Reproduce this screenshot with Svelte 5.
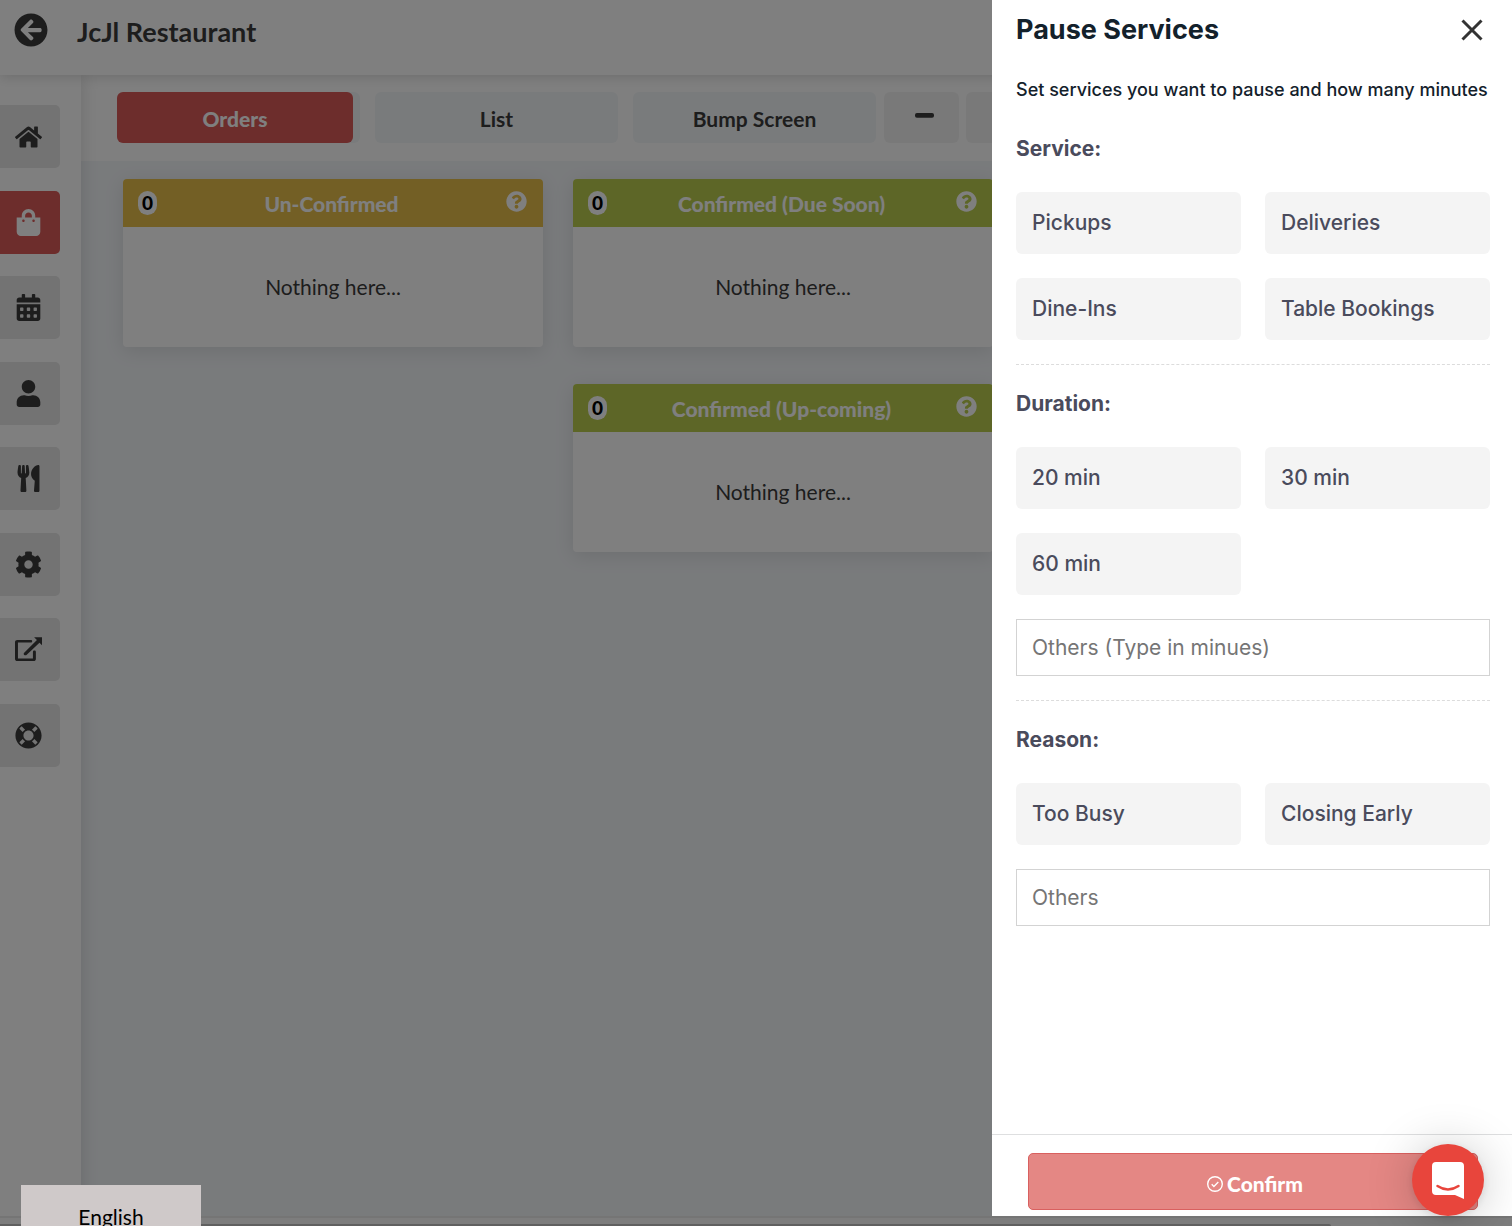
<script>
  const nav = [
    { name: 'Home', box: '0 0 576 512', d: 'M280.37 148.26L96 300.11V464a16 16 0 0 0 16 16l112.06-.29a16 16 0 0 0 15.92-16V368a16 16 0 0 1 16-16h64a16 16 0 0 1 16 16v95.64a16 16 0 0 0 16 16.05L464 480a16 16 0 0 0 16-16V300L295.67 148.26a12.19 12.19 0 0 0-15.3 0zM571.6 251.47L488 182.56V44.05a12 12 0 0 0-12-12h-56a12 12 0 0 0-12 12v72.61L318.47 43a48 48 0 0 0-61 0L4.34 251.47a12 12 0 0 0-1.6 16.9l25.5 31A12 12 0 0 0 45.15 301l235.22-193.74a12.19 12.19 0 0 1 15.3 0L530.9 301a12 12 0 0 0 16.9-1.6l25.5-31a12 12 0 0 0-1.7-16.93z' },
    { name: 'Orders', active: true, box: '0 0 448 512', d: 'M352 160v-32C352 57.42 294.579 0 224 0 153.42 0 96 57.42 96 128v32H0v272c0 44.183 35.817 80 80 80h288c44.183 0 80-35.817 80-80V160h-96zm-192-32c0-35.29 28.71-64 64-64s64 28.71 64 64v32H160v-32zm160 120c-13.255 0-24-10.745-24-24s10.745-24 24-24 24 10.745 24 24-10.745 24-24 24zm-192 0c-13.255 0-24-10.745-24-24s10.745-24 24-24 24 10.745 24 24-10.745 24-24 24z' },
    { name: 'Bookings', box: '0 0 448 512', d: 'M0 464c0 26.5 21.5 48 48 48h352c26.5 0 48-21.5 48-48V192H0v272zm320-196c0-6.6 5.4-12 12-12h40c6.6 0 12 5.4 12 12v40c0 6.6-5.4 12-12 12h-40c-6.6 0-12-5.4-12-12v-40zm0 128c0-6.6 5.4-12 12-12h40c6.6 0 12 5.4 12 12v40c0 6.6-5.4 12-12 12h-40c-6.6 0-12-5.4-12-12v-40zM192 268c0-6.6 5.4-12 12-12h40c6.6 0 12 5.4 12 12v40c0 6.6-5.4 12-12 12h-40c-6.6 0-12-5.4-12-12v-40zm0 128c0-6.6 5.4-12 12-12h40c6.6 0 12 5.4 12 12v40c0 6.6-5.4 12-12 12h-40c-6.6 0-12-5.4-12-12v-40zM64 268c0-6.6 5.4-12 12-12h40c6.6 0 12 5.4 12 12v40c0 6.6-5.4 12-12 12H76c-6.6 0-12-5.4-12-12v-40zm0 128c0-6.6 5.4-12 12-12h40c6.6 0 12 5.4 12 12v40c0 6.6-5.4 12-12 12H76c-6.6 0-12-5.4-12-12v-40zM400 64h-48V16c0-8.8-7.2-16-16-16h-32c-8.8 0-16 7.2-16 16v48H160V16c0-8.8-7.2-16-16-16h-32c-8.8 0-16 7.2-16 16v48H48C21.5 64 0 85.5 0 112v48h448v-48c0-26.5-21.5-48-48-48z' },
    { name: 'Customers', box: '0 0 448 512', d: 'M224 256c70.7 0 128-57.3 128-128S294.7 0 224 0 96 57.3 96 128s57.3 128 128 128zm89.6 32h-16.7c-22.2 10.2-46.9 16-72.9 16s-50.6-5.8-72.9-16h-16.7C60.2 288 0 348.2 0 422.4V464c0 26.5 21.5 48 48 48h352c26.5 0 48-21.5 48-48v-41.6c0-74.2-60.2-134.4-134.4-134.4z' },
    { name: 'Menus', box: '0 0 416 512', d: 'M207.9 15.2c.8 4.7 16.1 94.5 16.1 128.8 0 52.3-27.8 89.6-68.9 104.6L168 486.7c.7 13.7-10.2 25.3-24 25.3H80c-13.7 0-24.7-11.5-24-25.3l12.9-238.1C27.7 233.6 0 196.2 0 144 0 109.6 15.3 19.9 16.1 15.2 19.3-5.1 61.4-5.4 64 16.3v141.2c1.3 3.4 15.1 3.2 16 0 1.4-25.3 7.9-139.2 8-141.8 3.3-20.8 44.7-20.8 47.9 0 .2 2.7 6.6 116.5 8 141.8.9 3.2 14.8 3.4 16 0V16.3c2.6-21.6 44.8-21.4 47.9-1.1zm119.2 285.7l-15 185.1c-1.2 14 9.9 26 23.9 26h56c13.3 0 24-10.7 24-24V24c0-13.2-10.7-24-24-24-82.5 0-221.4 178.5-64.9 300.9z' },
    { name: 'Settings', box: '0 0 512 512', d: 'M487.4 315.7l-42.6-24.6c4.3-23.2 4.3-47 0-70.2l42.6-24.6c4.9-2.8 7.1-8.6 5.5-14-11.1-35.6-30-67.8-54.7-94.6-3.8-4.1-10-5.1-14.8-2.3L380.8 110c-17.9-15.4-38.5-27.3-60.8-35.1V25.8c0-5.6-3.9-10.5-9.4-11.7-36.7-8.2-74.3-7.8-109.2 0-5.5 1.2-9.4 6.1-9.4 11.7V75c-22.2 7.9-42.8 19.8-60.8 35.1L88.7 85.5c-4.9-2.8-11-1.9-14.8 2.3-24.7 26.7-43.6 58.9-54.7 94.6-1.7 5.4.6 11.2 5.5 14L67.3 221c-4.3 23.2-4.3 47 0 70.2l-42.6 24.6c-4.9 2.8-7.1 8.6-5.5 14 11.1 35.6 30 67.8 54.7 94.6 3.8 4.1 10 5.1 14.8 2.3l42.6-24.6c17.9 15.4 38.5 27.3 60.8 35.1v49.2c0 5.6 3.9 10.5 9.4 11.7 36.7 8.2 74.3 7.8 109.2 0 5.5-1.2 9.4-6.1 9.4-11.7v-49.2c22.2-7.9 42.8-19.8 60.8-35.1l42.6 24.6c4.9 2.8 11 1.9 14.8-2.3 24.7-26.7 43.6-58.9 54.7-94.6 1.5-5.5-.7-11.3-5.6-14.1zM256 336c-44.1 0-80-35.9-80-80s35.9-80 80-80 80 35.9 80 80-35.9 80-80 80z' },
    { name: 'Open store', box: '0 0 512 512', d: 'M512 26V174L464 130L218 358C206 370 186 370 174 358C162 346 162 328 174 316L416 76L362 26ZM44 74H300C316 74 326 84 326 98S316 124 300 124H56V426H340V302C340 286 352 276 368 276S396 286 396 302V436C396 460 380 476 356 476H44C18 476 0 460 0 436V114C0 90 18 74 44 74Z' },
    { name: 'Support', box: '0 0 512 512', d: 'M256 8C119.033 8 8 119.033 8 256s111.033 248 248 248 248-111.033 248-248S392.967 8 256 8zm173.696 119.559l-63.399 63.399c-10.987-18.559-26.67-34.252-45.255-45.255l63.399-63.399a218.396 218.396 0 0 1 45.255 45.255zM256 352c-53.019 0-96-42.981-96-96s42.981-96 96-96 96 42.981 96 96-42.981 96-96 96zM127.559 82.304l63.399 63.399c-18.559 10.987-34.252 26.67-45.255 45.255l-63.399-63.399a218.372 218.372 0 0 1 45.255-45.255zM82.304 384.441l63.399-63.399c10.987 18.559 26.67 34.252 45.255 45.255l-63.399 63.399a218.396 218.396 0 0 1-45.255-45.255zm302.137 45.255l-63.399-63.399c18.559-10.987 34.252-26.67 45.255-45.255l63.399 63.399a218.403 218.403 0 0 1-45.255 45.255z' }
  ];

  const columns = [
    [{ title: 'Un-Confirmed', count: 0, tone: 'gold' }],
    [
      { title: 'Confirmed (Due Soon)', count: 0, tone: 'green' },
      { title: 'Confirmed (Up-coming)', count: 0, tone: 'green' }
    ]
  ];

  const sections = [
    { title: 'Service:', options: ['Pickups', 'Deliveries', 'Dine-Ins', 'Table Bookings'] },
    { title: 'Duration:', options: ['20 min', '30 min', '60 min'], other: 'Others (Type in minues)' },
    { title: 'Reason:', options: ['Too Busy', 'Closing Early'], other: 'Others' }
  ];

  let picked = $state({});
</script>

<div class="app">
  <header class="topbar">
    <button class="back" aria-label="Back">
      <svg viewBox="0 0 512 512"><path d="M256 504C119 504 8 393 8 256S119 8 256 8s248 111 248 248-111 248-248 248zm28.9-143.6L209.4 288H392c13.3 0 24-10.7 24-24v-16c0-13.3-10.7-24-24-24H209.4l75.5-72.4c9.7-9.3 9.9-24.8.4-34.3l-11-10.9c-9.4-9.4-24.6-9.4-33.9 0L107.7 239c-9.4 9.4-9.4 24.6 0 33.9l132.7 132.7c9.4 9.4 24.6 9.4 33.9 0l11-10.9c9.5-9.5 9.3-25-.4-34.3z" /></svg>
    </button>
    <h1>JcJl Restaurant</h1>
  </header>

  <div class="shell">
    <nav class="sidebar">
      <div class="links">
        {#each nav as item}
          <a href="#top" class:active={item.active} aria-label={item.name}>
            <svg viewBox={item.box}><path d={item.d} /></svg>
          </a>
        {/each}
      </div>
    </nav>

    <main>
      <div class="tabs">
        <div class="tab"><button class="tab-face selected">Orders</button></div>
        <div class="tab"><button class="tab-face">List</button></div>
        <div class="tab"><button class="tab-face">Bump Screen</button></div>
        <div class="zoomers">
          <button aria-label="Smaller"><svg viewBox="0 0 20 5"><rect width="20" height="5" rx="2" /></svg></button>
          <button aria-label="Larger"></button>
        </div>
      </div>

      <div class="board">
        {#each columns as column}
          <div class="column">
            {#each column as card}
              <section class="card">
                <div class="card-head {card.tone}">
                  <span class="count">{card.count}</span>
                  <h2>{card.title}</h2>
                  <button class="help" aria-label="Help">
                    <svg viewBox="0 0 512 512"><path d="M504 256c0 136.997-111.043 248-248 248S8 392.997 8 256C8 119.083 119.043 8 256 8s248 111.083 248 248zM262.655 90c-54.497 0-89.255 22.957-116.549 63.758-3.536 5.286-2.353 12.415 2.715 16.258l34.699 26.31c5.205 3.947 12.621 3.008 16.665-2.122 17.864-22.658 30.113-35.797 57.303-35.797 20.429 0 45.698 13.148 45.698 32.958 0 14.976-12.363 22.667-32.534 33.976C247.128 238.528 216 254.941 216 296v4c0 6.627 5.373 12 12 12h56c6.627 0 12-5.373 12-12v-1.333c0-28.462 83.186-29.647 83.186-106.667 0-58.002-60.165-102-116.531-102zM256 338c-25.365 0-46 20.635-46 46 0 25.364 20.635 46 46 46s46-20.636 46-46c0-25.365-20.635-46-46-46z" /></svg>
                  </button>
                </div>
                <p>Nothing here...</p>
              </section>
            {/each}
          </div>
        {/each}
      </div>
    </main>
  </div>
  <div class="track"><div class="thumb"></div></div>
</div>

<div class="backdrop"></div>

<aside class="drawer">
  <div class="drawer-head">
    <h2>Pause Services</h2>
    <button aria-label="Close">
      <svg viewBox="0 0 22 22"><path d="M1.5 1.5l19 19M20.5 1.5l-19 19" /></svg>
    </button>
  </div>
  <div class="drawer-body">
    <p class="intro">Set services you want to pause and how many minutes</p>
    {#each sections as section}
      <section class="group">
        <h3>{section.title}</h3>
        <div class="options">
          {#each section.options as option}
            <button class="option" class:picked={picked[option]} onclick={() => (picked[option] = !picked[option])}>{option}</button>
          {/each}
        </div>
        {#if section.other}
          <input type="text" placeholder={section.other} aria-label="{section.title} {section.other}" />
        {/if}
      </section>
    {/each}
  </div>
  <footer>
    <button class="confirm" disabled>
      <svg viewBox="0 0 16 16"><circle cx="8" cy="8" r="7.3" /><path d="M4.7 8.2l2.2 2.2 4.4-4.4" /></svg>
      Confirm
    </button>
  </footer>
</aside>

<button class="language">English</button>

<button class="chat" aria-label="Open chat">
  <svg viewBox="0 0 32 37"><path class="bubble" d="M4 0H28Q32 0 32 4V37L23 33H4Q0 33 0 29V4Q0 0 4 0Z" /><path class="smile" d="M5.500 24Q16 31 26.500 24" /></svg>
</button>

<style>
  :global(body) {
    overflow: hidden;
    font-family: Lato, "Liberation Sans", sans-serif;
    color: #3b3b3b;
  }
  button {
    font: inherit;
    color: inherit;
    border: 0;
    padding: 0;
    background: none;
    cursor: pointer;
  }
  h1, h2, h3, p { margin: 0; }
  svg { display: block; }

  .app {
    display: flex;
    flex-direction: column;
    height: 100vh;
    background: #fff;
  }
  .topbar {
    position: relative;
    z-index: 2;
    display: flex;
    align-items: flex-start;
    gap: 29px;
    height: 75px;
    box-sizing: border-box;
    padding: 13px 14px 0;
    background: #fff;
    box-shadow: 0 2px 12px rgba(0, 0, 0, 0.15);
  }
  .back svg { width: 34px; fill: #3b3b3b; }
  h1 { font-size: 27px; line-height: 38px; font-weight: 700; }

  .shell { display: flex; flex: 1; min-height: 0; }
  .sidebar {
    position: relative;
    z-index: 1;
    flex: 0 0 81px;
    padding-top: 30px;
    background: #fff;
    box-shadow: 2px 0 16px rgba(0, 0, 0, 0.12);
  }
  .links {
    display: flex;
    flex-direction: column;
    justify-content: space-between;
    height: 662px;
  }
  .links a {
    display: flex;
    align-items: center;
    justify-content: center;
    box-sizing: border-box;
    width: 60px;
    height: 63px;
    padding-right: 3px;
    border-radius: 0 5px 5px 0;
    background: #e6e6e6;
    fill: #3b3b3b;
  }
  .links a.active { background: #da5a58; fill: #fff; }
  .links svg { width: 27px; height: 27px; }
  .links a:first-child svg { height: 24px; }

  main {
    flex: 1;
    min-width: 0;
    background: #f3f6f9;
  }
  .tabs {
    display: flex;
    gap: 15px;
    height: 86px;
    box-sizing: border-box;
    padding: 17px 0 18px 36px;
    background: #fff;
  }
  .tab {
    flex: 0 0 243px;
    display: flex;
    border-radius: 6px;
    background: #f3f6f9;
  }
  .tab-face {
    width: 100%;
    padding-top: 2px;
    font-size: 21px;
    line-height: 28px;
    font-weight: 700;
    border-radius: 6px;
  }
  .tab-face.selected {
    width: 236px;
    background: #da5a58;
    color: #fff;
    font-weight: 900;
  }
  .zoomers { display: flex; gap: 7px; margin-left: -7px; }
  .zoomers button {
    display: flex;
    align-items: center;
    justify-content: center;
    width: 75px;
    padding: 0 0 4px 6px;
    border-radius: 6px;
    background: #f3f3f3;
  }
  .zoomers svg { width: 19px; fill: #3b3b3b; }

  .board {
    display: grid;
    grid-template-columns: repeat(3, 1fr);
    gap: 30px;
    padding: 18px 69px 0 42px;
  }
  .column { display: flex; flex-direction: column; gap: 37px; }
  .card {
    border-radius: 4px;
    background: #fff;
    box-shadow: 0 4px 20px rgba(0, 0, 0, 0.1);
  }
  .card-head {
    display: flex;
    align-items: center;
    height: 48px;
    box-sizing: border-box;
    padding: 0 16px 0 15px;
    border-radius: 4px 4px 0 0;
    color: #fff;
  }
  .gold { background: #e6be4a; }
  .green { background: #bacd4e; }
  .count {
    width: 19px;
    border-radius: 10px;
    background: #fff;
    color: #000;
    font-size: 19px;
    line-height: 24px;
    font-weight: 900;
    text-align: center;
  }
  .card h2 {
    flex: 1;
    padding-top: 2px;
    font-size: 21px;
    line-height: 28px;
    font-weight: 900;
    text-align: center;
  }
  .help { padding-bottom: 3px; }
  .help svg { width: 21px; fill: #fff; }
  .card p {
    padding: 46px 0;
    font-size: 21px;
    line-height: 28px;
    text-align: center;
  }

  .track {
    position: relative;
    z-index: 3;
    height: 8px;
    background: #fafafa;
    border-top: 2px solid #ebebeb;
    display: flex;
    align-items: flex-end;
  }
  .thumb {
    width: 88%;
    height: 2px;
    border-radius: 0 4px 0 0;
    background: #c1c1c1;
  }

  .backdrop {
    position: fixed;
    inset: 0;
    z-index: 10;
    background: rgba(0, 0, 0, 0.5);
  }

  .drawer {
    position: fixed;
    z-index: 11;
    top: 0;
    right: 0;
    bottom: 10px;
    width: 520px;
    max-width: 100%;
    display: flex;
    flex-direction: column;
    background: #fff;
    color: #4a4b5c;
    font-family: Inter, "Liberation Sans", sans-serif;
  }
  .drawer-head {
    display: flex;
    align-items: center;
    justify-content: space-between;
    height: 60px;
    padding: 0 29px 0 24px;
    color: #13212b;
  }
  .drawer-head h2 { font-size: 27px; line-height: 32px; font-weight: 700; }
  .drawer-head svg {
    width: 22px;
    fill: none;
    stroke: #333;
    stroke-width: 3;
  }
  .drawer-body { flex: 1; padding: 18px 22px 0 24px; }
  .intro {
    font-size: 18px;
    line-height: 24px;
    font-weight: 500;
    color: #13212b;
    padding-bottom: 8px;
    white-space: nowrap;
  }
  .group {
    display: flex;
    flex-direction: column;
    gap: 24px;
    padding: 22px 0 24px;
  }
  .group + .group { border-top: 1px dashed #dcdcdc; }
  h3 {
    padding-bottom: 2px;
    font-size: 21px;
    line-height: 34px;
    font-weight: 700;
  }
  .options {
    display: grid;
    grid-template-columns: 1fr 1fr;
    gap: 24px;
  }
  .option {
    height: 62px;
    padding: 0 16px;
    border-radius: 6px;
    background: #f4f4f4;
    font-size: 21px;
    line-height: 28px;
    font-weight: 500;
    text-align: left;
  }
  .option.picked { background: #fbe3e2; }
  input {
    height: 57px;
    box-sizing: border-box;
    padding: 0 15px;
    border: 1px solid #d3d3d3;
    border-radius: 0;
    font-family: inherit;
    font-size: 21px;
    color: #4a4b5c;
  }
  input::placeholder { color: #757575; }
  footer {
    padding: 18px 34px 6px 36px;
    border-top: 1px solid #dedfe0;
  }
  .confirm {
    display: flex;
    align-items: center;
    justify-content: center;
    gap: 4px;
    width: 100%;
    height: 57px;
    padding: 4px 0 0 4px;
    border: 1px solid #d9605f;
    border-radius: 5px;
    background: #e48784;
    color: #fff;
    font-family: Lato, "Liberation Sans", sans-serif;
    font-size: 21px;
    line-height: 28px;
    font-weight: 900;
  }
  .confirm svg {
    width: 16px;
    fill: none;
    stroke: #fff;
    stroke-width: 1.4;
  }

  .language {
    position: fixed;
    z-index: 12;
    left: 21px;
    bottom: 0;
    width: 180px;
    height: 41px;
    padding-top: 18px;
    overflow: hidden;
    background: #cfc9c9;
    color: #000;
    font-size: 21px;
    line-height: 28px;
  }
  .chat {
    position: fixed;
    z-index: 13;
    right: 28px;
    bottom: 10px;
    display: flex;
    align-items: center;
    justify-content: center;
    width: 72px;
    height: 72px;
    border-radius: 50%;
    background: #e8453c;
    box-shadow: 0 2px 9px rgba(0, 0, 0, 0.1), 0 3px 48px rgba(0, 0, 0, 0.22);
  }
  .chat svg { width: 32px; }
  .bubble { fill: #fff; }
  .smile { fill: none; stroke: #e8453c; stroke-width: 2.5; stroke-linecap: round; }
</style>
